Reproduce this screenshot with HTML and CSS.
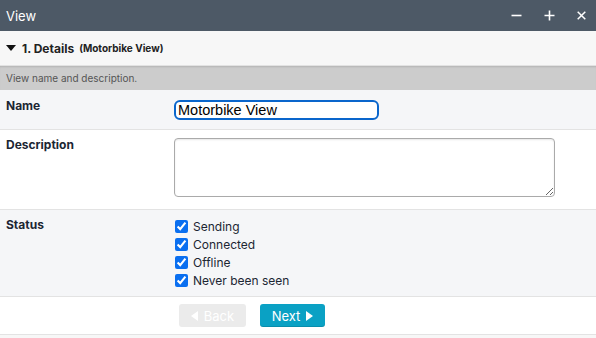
FILE: index.html
```html
<!DOCTYPE html>
<html>
<head>
<meta charset="utf-8">
<link rel="stylesheet" href="styles.css">
</head>
<body>
<div class="window">
  <div class="titlebar">
    <span class="title">View</span>
    <div class="controls">
      <svg class="ctl" width="11" height="11" viewBox="0 0 11 11"><path d="M0.5 5.5H10.5" stroke="#fff" stroke-width="1.6"/></svg>
      <svg class="ctl" width="11" height="11" viewBox="0 0 11 11"><path d="M0.5 5.5H10.5M5.5 0.5V10.5" stroke="#fff" stroke-width="1.6"/></svg>
      <svg class="ctl" width="9" height="9" viewBox="0 0 9 9"><path d="M0.7 0.7L8.3 8.3M8.3 0.7L0.7 8.3" stroke="#fff" stroke-width="1.5"/></svg>
    </div>
  </div>
  <div class="section-head">
    <svg class="caret" width="10" height="6" viewBox="0 0 10 6"><path d="M0 0H10L5 6Z" fill="#111"/></svg>
    <span class="sec-title">1. Details</span>
    <span class="sec-sub">(Motorbike View)</span>
  </div>
  <div class="hint">View name and description.</div>
  <div class="row row-name alt">
    <div class="label">Name</div>
    <div class="value"><input class="text-in" type="text" value="Motorbike View"></div>
  </div>
  <div class="row row-desc">
    <div class="label">Description</div>
    <div class="value"><textarea class="text-area"></textarea></div>
  </div>
  <div class="row row-status alt">
    <div class="label">Status</div>
    <div class="value checks">
      <label class="check"><input type="checkbox" checked><span>Sending</span></label>
      <label class="check"><input type="checkbox" checked><span>Connected</span></label>
      <label class="check"><input type="checkbox" checked><span>Offline</span></label>
      <label class="check"><input type="checkbox" checked><span>Never been seen</span></label>
    </div>
  </div>
  <div class="row row-buttons">
    <div class="label"></div>
    <div class="value buttons">
      <button class="btn btn-back" disabled><svg width="7" height="10" viewBox="0 0 7 10"><path d="M7 0V10L0 5Z" fill="#fff"/></svg>Back</button>
      <button class="btn btn-next">Next<svg width="7" height="10" viewBox="0 0 7 10"><path d="M0 0V10L7 5Z" fill="#fff"/></svg></button>
    </div>
  </div>
  <div class="footer"></div>
</div>
</body>
</html>
```
FILE: styles.css
```css
* { box-sizing: border-box; }
html, body { margin: 0; padding: 0; background: #fff; }
body { font-family: Inter, "Noto Sans", sans-serif; color: #1c2633; width: 596px; height: 338px; overflow: hidden; }
.window { display: flex; flex-direction: column; }
.titlebar { height: 31px; background: #4d5966; display: flex; align-items: center; justify-content: space-between; padding: 0 10px 0 6px; }
.title { color: #fff; font-size: 13px; }
.controls { display: flex; align-items: center; gap: 22px; }
.ctl { display: block; }
.section-head { height: 35px; background: #f7f7f7; border-bottom: 1px solid #e2e2e2; display: flex; align-items: center; padding: 0 6px; }
.caret { margin-right: 6px; }
.sec-title { font-weight: 700; font-size: 12px; color: #222; margin-right: 5px; }
.sec-sub { font-weight: 700; font-size: 10px; color: #222; }
.hint { height: 24px; background: #cccccc; box-shadow: inset 0 2px 2px -1px rgba(0,0,0,0.12); font-size: 10px; color: #555; padding: 0 6px; display: flex; align-items: center; }
.row { display: grid; grid-template-columns: 174px 1fr; border-bottom: 1px solid #e3e3e3; background: #fff; }
.row.alt { background: #f5f6f8; }
.label { font-weight: 700; font-size: 12px; padding-left: 6px; color: #1c2633; }
.row-name { height: 40px; padding-top: 8px; }
.row-name .label { padding-top: 0; }
.text-in { width: 205px; height: 20px; border: 2px solid #0a66cc; border-radius: 6px; font-family: "Liberation Sans", Arial, sans-serif; font-size: 14.5px; color: #000; padding: 0 2px; margin: 2px 0 0; outline: none; background: #fff; }
.row-desc { height: 80px; padding-top: 7px; }
.row-desc .label { padding-top: 0; }
.text-area { display: block; width: 381px; height: 59px; margin: 1px 0 0; border: 1px solid #aaa; border-radius: 4px; box-shadow: inset 0 1px 2px rgba(0,0,0,0.1); resize: both; background: #fff; }
.row-status { height: 87px; padding-top: 7px; }
.row-status .label { padding-top: 0; }
.checks { display: flex; flex-direction: column; }
.check { display: flex; align-items: center; height: 18px; font-size: 12px; color: #1c2633; }
.check input { width: 13px; height: 13px; margin: 0 5px 0 1px; accent-color: #0a6ff0; }
.row-buttons { height: 38px; align-items: center; }
.buttons { display: flex; gap: 14px; padding-left: 5px; }
.btn { height: 23px; border: none; border-radius: 3px; font-family: Inter, "Noto Sans", sans-serif; font-size: 13px; color: #fff; display: flex; align-items: center; justify-content: center; gap: 6px; padding: 0; }
.btn-back { width: 67px; background: #ebebeb; color: #fff; }
.btn-next { width: 65px; background: #0aa1c4; box-shadow: inset 0 -1px 0 rgba(0,0,0,0.12); }
.footer { height: 4px; background: #f7f7f7; }
```
